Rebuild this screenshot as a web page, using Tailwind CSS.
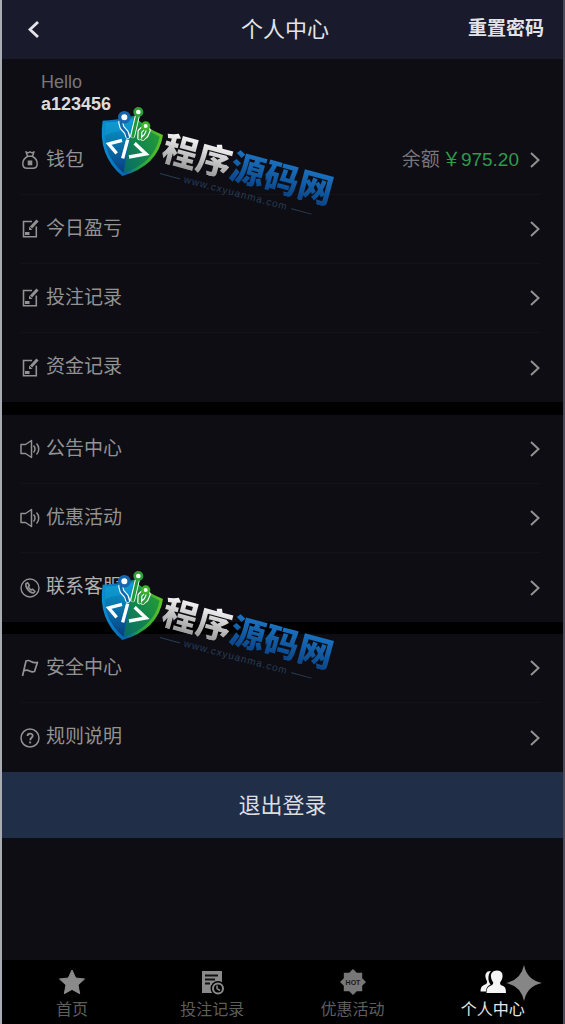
<!DOCTYPE html>
<html lang="zh-CN">
<head>
    <meta charset="UTF-8">
    <meta name="viewport" content="width=device-width, initial-scale=1.0">
    <script src="https://cdn.jsdelivr.net/npm/@tailwindcss/browser@4"></script>
    <title>个人中心</title>
</head>
<body class="bg-black font-['Liberation_Sans','Noto_Sans_CJK_SC',sans-serif] text-[#929292]">

    <!-- Shared icons (not display:none, gradients must stay usable) -->
    <svg class="absolute w-0 h-0" xmlns="http://www.w3.org/2000/svg">
        <symbol id="i-arrow" viewBox="0 0 12 18">
            <path d="M2 2l7.5 7L2 16" fill="none" stroke="currentColor" stroke-width="2"/>
        </symbol>
        <symbol id="i-wallet" viewBox="0 0 20 20">
            <g fill="none" stroke="currentColor" stroke-width="1.5" stroke-linejoin="round">
                <path d="M6 1.8l2 1 2-1 2 1 2-1-1.5 4.4h-5zM7.5 6.2h5"/>
                <path d="M7.5 6.5C4.5 8 2.8 11 2.8 13.8c0 3 1.5 4.5 4.2 4.5h6c2.7 0 4.2-1.5 4.2-4.5 0-2.8-1.7-5.8-4.7-7.3"/>
            </g>
            <path d="M7.7 10.5h4.6v4.8H7.7z" fill="currentColor"/>
        </symbol>
        <symbol id="i-note" viewBox="0 0 20 20">
            <path d="M12 2.5H3.5v15.2h12.8V7.5" fill="none" stroke="currentColor" stroke-width="1.6"/>
            <path d="M17.5 1.5L11 8.5" fill="none" stroke="currentColor" stroke-width="3"/>
            <path d="M9 7.5v3.500h3.500z" fill="currentColor"/>
            <path d="M5 13h4.5v3H5z" fill="currentColor"/>
        </symbol>
        <symbol id="i-speaker" viewBox="0 0 20 20">
            <g fill="none" stroke="currentColor" stroke-width="1.5" stroke-linejoin="round">
                <path d="M1 5.5h4.5l6-4v17l-6-4H1z"/>
                <path d="M13.5 6.5c2 2 2 5 0 7M16.5 4.5c3 3 3 8 0 11"/>
            </g>
        </symbol>
        <symbol id="i-phone" viewBox="0 0 20 20">
            <circle cx="10" cy="10" r="9" fill="none" stroke="currentColor" stroke-width="1.4"/>
            <path d="M7.8 4.8L6 5.5c-1 4 3.5 9.5 7.5 9.5l1.5-1.5-2.5-2.3-1.5.8c-1-.5-2.3-2-2.6-3.2l1-1.2z" fill="none" stroke="currentColor" stroke-width="1.6" stroke-linejoin="round"/>
        </symbol>
        <symbol id="i-flag" viewBox="0 0 20 20">
            <path d="M2.5 18L6 3c2-1 3.5-.5 5 .5 2 1.2 4 1.5 6.5.8L14.5 13.5c-2 .8-3.5.3-5-.5-1.7-1-3.5-1.2-5.500-.3" fill="none" stroke="currentColor" stroke-width="1.7" stroke-linejoin="round"/>
        </symbol>
        <symbol id="i-help" viewBox="0 0 20 20">
            <circle cx="10" cy="10" r="9" fill="none" stroke="currentColor" stroke-width="1.5"/>
            <path d="M7.5 8c0-3.2 5.2-3.2 5.2-.2 0 2-2.5 2-2.5 4.5" fill="none" stroke="currentColor" stroke-width="1.8"/>
            <path d="M9.2 13.5h1.9v1.9H9.2z" fill="currentColor"/>
        </symbol>

        <!-- Site logo -->
        <linearGradient id="g-rim" x1="0" y1="0" x2="1" y2="0">
            <stop offset="0" stop-color="#0b8fd0"/><stop offset=".4" stop-color="#0a62b0"/>
            <stop offset=".6" stop-color="#1fa046"/><stop offset="1" stop-color="#62c520"/>
        </linearGradient>
        <linearGradient id="g-left" x1="0" y1="0" x2="0" y2="1">
            <stop offset="0" stop-color="#0a97cf"/><stop offset=".45" stop-color="#0875ad"/><stop offset="1" stop-color="#083c80"/>
        </linearGradient>
        <linearGradient id="g-right" x1="0" y1="1" x2="1" y2="0">
            <stop offset="0" stop-color="#056b6a"/><stop offset="1" stop-color="#27a32c"/>
        </linearGradient>
        <symbol id="shield" viewBox="0 0 240 270">
            <path d="M38 77Q80 75 132 62Q165 98 219 120Q205 212 97 243Q22 180 38 77z" fill="url(#g-rim)"/>
            <path d="M46 84Q88 82 131 70L101 234Q32 176 46 84z" fill="url(#g-left)"/>
            <path d="M131 70Q162 104 209 125Q193 202 101 234z" fill="url(#g-right)"/>
            <path d="M46 84Q88 82 131 70L123 108Q80 105 44 122z" fill="#13a6dc" opacity=".4"/>
            <g fill="none" stroke-linecap="round" stroke-linejoin="round">
                <g stroke="#fff" stroke-width="15">
                    <path d="M103 66L92 82L96 97L109 112L113 124"/>
                    <path d="M145 50L128 122"/>
                    <path d="M167 92L150 109L149 128M167 92L175 106L168 122L158 130"/>
                </g>
                <path d="M103 66L92 82L96 97L109 112L113 126" stroke="#0a69b0" stroke-width="8"/>
                <path d="M145 50L128 124" stroke="#21983b" stroke-width="9"/>
                <path d="M167 92L150 109L149 130M167 92L175 106L168 122L158 132" stroke="#27a238" stroke-width="8"/>
            </g>
            <circle cx="103" cy="67" r="14" fill="#fff" stroke="#1566ae" stroke-width="10"/>
            <circle cx="145" cy="51" r="11" fill="#fff" stroke="#29a238" stroke-width="8"/>
            <circle cx="167" cy="93" r="10" fill="#fff" stroke="#3bb32d" stroke-width="8"/>
            <g fill="none" stroke="#fff" stroke-width="10">
                <path d="M96 136L56 147L80 175"/>
                <path d="M113 134L98 190"/>
                <path d="M134 145L168 177L117 186"/>
            </g>
        </symbol>
    </svg>

    <div class="min-h-screen flex flex-col bg-[#0e0d13] border-x-2 border-l-[#a9adb3] border-r-[#4a4a58]">
        <header class="h-[59px] shrink-0 grid grid-cols-3 items-center bg-[#191b2c] pl-6 pr-[19px] text-[#e4e4e8]">
            <button class="justify-self-start" aria-label="返回">
                <svg class="w-4 h-5" viewBox="0 0 16 20"><path d="M12 2L4 9.5l8 7.5" fill="none" stroke="currentColor" stroke-width="2.8"/></svg>
            </button>
            <h1 class="justify-self-center text-[22px] whitespace-nowrap">个人中心</h1>
            <a href="#" class="justify-self-end text-[19px] font-bold whitespace-nowrap">重置密码</a>
        </header>

        <main>
            <section class="relative">
                <div class="h-[67px] pl-[39px] pt-3 text-[18px] leading-[22px]">
                    <p class="text-[#77777a]">Hello</p>
                    <p class="font-bold text-[#dcdcdc]">a123456</p>
                </div>
                <nav class="pl-[18px] pr-[22px] text-[19px] divide-y divide-[#131218]">
                    <a href="#" class="h-[69px] flex items-center gap-1.5">
                        <svg class="size-5"><use href="#i-wallet"/></svg>
                        <span>钱包</span>
                        <span class="ml-auto text-[#76767a]">余额</span>
                        <span class="-ml-1 mr-1 text-[#2f9a4b]">￥975.20</span>
                        <svg class="w-3 h-[18px]"><use href="#i-arrow"/></svg>
                    </a>
                    <a href="#" class="h-[69px] flex items-center gap-1.5">
                        <svg class="size-5"><use href="#i-note"/></svg>
                        <span>今日盈亏</span>
                        <svg class="ml-auto w-3 h-[18px]"><use href="#i-arrow"/></svg>
                    </a>
                    <a href="#" class="h-[69px] flex items-center gap-1.5">
                        <svg class="size-5"><use href="#i-note"/></svg>
                        <span>投注记录</span>
                        <svg class="ml-auto w-3 h-[18px]"><use href="#i-arrow"/></svg>
                    </a>
                    <a href="#" class="h-[69px] flex items-center gap-1.5">
                        <svg class="size-5"><use href="#i-note"/></svg>
                        <span>资金记录</span>
                        <svg class="ml-auto w-3 h-[18px]"><use href="#i-arrow"/></svg>
                    </a>
                </nav>
                <div class="absolute left-[88px] top-9 w-[260px] h-[125px] pointer-events-none">
                    <svg class="w-20 h-[90px]"><use href="#shield"/></svg>
                    <p class="absolute left-[74px] top-8 flex origin-left rotate-15 font-['Noto_Sans_CJK_SC',sans-serif] text-[35px] leading-9 font-black whitespace-nowrap text-transparent">
                        <span class="bg-clip-text bg-linear-to-b from-white to-[#9b9b9b]">程序</span>
                        <span class="bg-clip-text bg-linear-to-b from-[#1c78c8] to-[#0b4587]">源码网</span>
                    </p>
                    <p class="absolute left-[70px] top-[70px] w-[157px] flex items-center gap-1 origin-left rotate-15 text-[10px] leading-4 tracking-[1px] text-[#263d55]">
                        <span class="h-px flex-1 bg-[#263d55]"></span>www.cxyuanma.com<span class="h-px flex-1 bg-[#263d55]"></span>
                    </p>
                </div>
            </section>

            <section class="relative border-t-[13px] border-black">
                <nav class="pl-[18px] pr-[22px] text-[19px] divide-y divide-[#131218]">
                    <a href="#" class="h-[69px] flex items-center gap-1.5">
                        <svg class="size-5"><use href="#i-speaker"/></svg>
                        <span>公告中心</span>
                        <svg class="ml-auto w-3 h-[18px]"><use href="#i-arrow"/></svg>
                    </a>
                    <a href="#" class="h-[69px] flex items-center gap-1.5">
                        <svg class="size-5"><use href="#i-speaker"/></svg>
                        <span>优惠活动</span>
                        <svg class="ml-auto w-3 h-[18px]"><use href="#i-arrow"/></svg>
                    </a>
                    <a href="#" class="h-[69px] flex items-center gap-1.5">
                        <svg class="size-5"><use href="#i-phone"/></svg>
                        <span class="text-[#b0b0b0]">联系客服</span>
                        <svg class="ml-auto w-3 h-[18px]"><use href="#i-arrow"/></svg>
                    </a>
                </nav>
                <div class="absolute z-10 left-[88px] top-36 w-[260px] h-[125px] pointer-events-none">
                    <svg class="w-20 h-[90px]"><use href="#shield"/></svg>
                    <p class="absolute left-[74px] top-8 flex origin-left rotate-15 font-['Noto_Sans_CJK_SC',sans-serif] text-[35px] leading-9 font-black whitespace-nowrap text-transparent">
                        <span class="bg-clip-text bg-linear-to-b from-white to-[#9b9b9b]">程序</span>
                        <span class="bg-clip-text bg-linear-to-b from-[#1c78c8] to-[#0b4587]">源码网</span>
                    </p>
                    <p class="absolute left-[70px] top-[70px] w-[157px] flex items-center gap-1 origin-left rotate-15 text-[10px] leading-4 tracking-[1px] text-[#263d55]">
                        <span class="h-px flex-1 bg-[#263d55]"></span>www.cxyuanma.com<span class="h-px flex-1 bg-[#263d55]"></span>
                    </p>
                </div>
            </section>

            <section class="border-t-[12px] border-black">
                <nav class="pl-[18px] pr-[22px] text-[19px] divide-y divide-[#131218]">
                    <a href="#" class="h-[69px] flex items-center gap-1.5">
                        <svg class="size-5"><use href="#i-flag"/></svg>
                        <span>安全中心</span>
                        <svg class="ml-auto w-3 h-[18px]"><use href="#i-arrow"/></svg>
                    </a>
                    <a href="#" class="h-[69px] flex items-center gap-1.5">
                        <svg class="size-5"><use href="#i-help"/></svg>
                        <span>规则说明</span>
                        <svg class="ml-auto w-3 h-[18px]"><use href="#i-arrow"/></svg>
                    </a>
                </nav>
            </section>

            <button class="block w-full h-[66px] bg-[#202e48] text-[22px] text-[#dcdde0]">退出登录</button>
        </main>

        <!-- Tab bar -->
        <nav class="relative mt-auto h-16 shrink-0 grid grid-cols-4 bg-black text-[16px] leading-5 text-[#5e5e5e]">
            <a href="#" class="flex flex-col items-center pt-2 gap-1">
                <svg class="size-7" viewBox="0 0 28 28"><path d="M14 2l3.7 8 8.8 1-6.5 6 1.7 8.7L14 21.4l-7.7 4.3L8 17l-6.5-6 8.8-1z" fill="#8a8a8a" stroke="#8a8a8a" stroke-linejoin="round"/></svg>
                <span>首页</span>
            </a>
            <a href="#" class="flex flex-col items-center pt-2 gap-1">
                <svg class="size-7" viewBox="0 0 28 28">
                    <path d="M4 3h20v22H4z" fill="#8a8a8a"/>
                    <path d="M7 7.5h13M7 11.5h10M7 15.5h5" stroke="#111" stroke-width="2"/>
                    <circle cx="20" cy="20.5" r="7.5" fill="#000"/>
                    <circle cx="20" cy="20.5" r="5" fill="none" stroke="#8a8a8a" stroke-width="2"/>
                    <path d="M19 17.5v3.2l3 1.8" fill="none" stroke="#8a8a8a" stroke-width="1.5"/>
                </svg>
                <span>投注记录</span>
            </a>
            <a href="#" class="flex flex-col items-center pt-2 gap-1">
                <svg class="size-7" viewBox="0 0 28 28">
                    <path d="M14 1l3.8 3.7 5.4.1v5.4L27 14l-3.8 3.8v5.4h-5.4L14 27l-3.8-3.8H4.8v-5.4L1 14l3.8-3.8V4.8l5.4-.1z" fill="#777"/>
                    <text x="14" y="17" text-anchor="middle" class="text-[7px] font-bold" fill="#1a1a1a">HOT</text>
                </svg>
                <span>优惠活动</span>
            </a>
            <a href="#" class="flex flex-col items-center pt-2 gap-1 text-[#e6e6e6]">
                <svg class="size-7" viewBox="0 0 28 28">
                    <path d="M11.5 3C7.5 3 6 6 6.5 9c.3 2 1 3 1.5 4 .5 2-.5 3-3 4-2.500 1-3.500 3-3.500 6.500H7C7 20 8.500 18 11.500 16.500c-1.500-2-2.500-5-2-8 .3-2 1-4 2.500-5.400z" fill="#f5f5f5"/>
                    <path d="M18 2.5c-4.5 0-6.5 3-6 6.5.3 2.5 1.2 4 2.2 5.2.3 2-.7 2.8-3.2 3.8-2.8 1.2-3.5 3.3-3.5 7H27c0-4-.5-6-3.5-7.2-2-.8-2.7-1.8-2.3-3.6 1-1.2 2-2.7 2.3-5.2.5-3.5-1-6.500-5.500-6.500z" fill="#f5f5f5"/>
                </svg>
                <span>个人中心</span>
            </a>
            <svg class="absolute right-[21px] top-[5px] size-9 pointer-events-none" viewBox="0 0 36 36"><path d="M18 0Q21 15 36 18Q21 21 18 36Q15 21 0 18Q15 15 18 0z" fill="#868686"/></svg>
        </nav>
    </div>
</body>
</html>
